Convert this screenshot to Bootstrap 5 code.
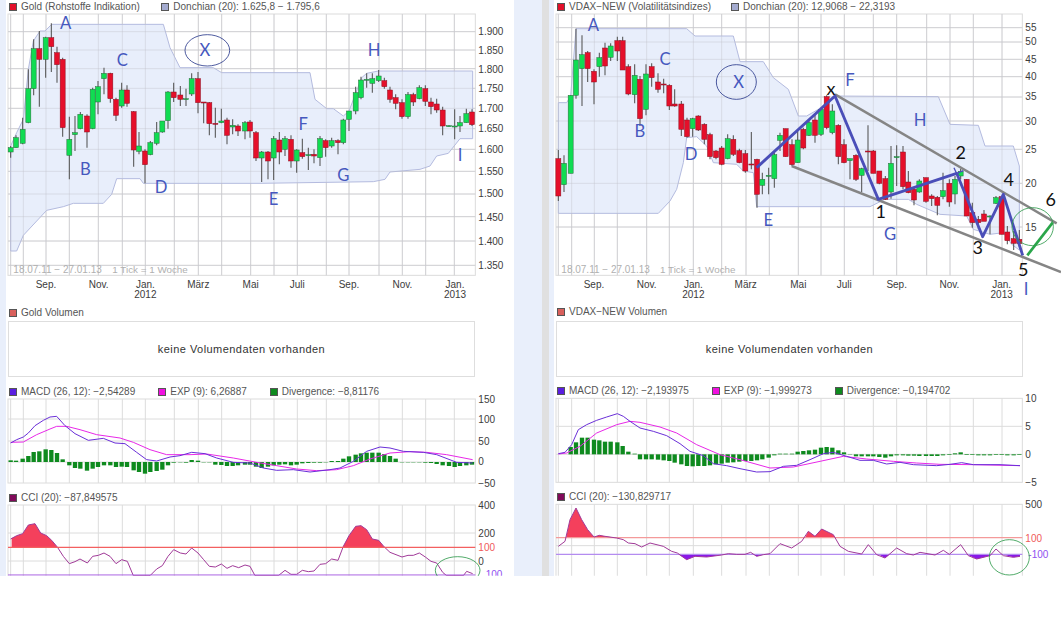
<!DOCTYPE html>
<html lang="de">
<head>
<meta charset="utf-8">
<title>Gold / VDAX-NEW</title>
<link href="https://cdn.jsdelivr.net/npm/bootstrap@5.3.0/dist/css/bootstrap.min.css" rel="stylesheet">
<style>
html,body{background:#fff;margin:0;overflow:hidden}
.sheet{height:576px;font-family:"Liberation Sans",Arial,sans-serif;font-size:10px;color:#444}
.strip-blue{background:#e9effb}
.strip-l{width:6px}
.strip-m{width:28px}
.strip-g{width:7px;background:#e0e0e0}
.strip-r{width:5px}
.pane{background:#fff;flex:none}
.pane-l{width:508px;padding-left:2px}
.pane-r{width:507px;padding-left:2px}
.leg-row{height:14px;line-height:14px;gap:23px;white-space:nowrap;padding-left:1px;color:#555}
.leg-top{gap:20px}
.pane-l .leg-top{gap:21.5px}
.leg-low{padding-top:1px}
.leg-item{gap:4px}
.swatch{width:8px;height:8px;border:1px solid #555;flex:none}
.c-red{background:#e3102a}
.c-don{background:#a4abd0}
.c-vol{background:#d9605c}
.c-mac{background:#5a1ee0}
.c-exp{background:#f010e0}
.c-div{background:#0e8a1e}
.c-cci{background:#800a5a}
.spc-7{margin-top:7px}
.spc-1{margin-top:1px}
.spc-2{margin-top:2px}
.vol-box{width:467px;height:56px;border:1px solid #dedede;font-size:11px;letter-spacing:.45px;color:#333}
svg.plot{display:block;overflow:visible;font-family:"Liberation Sans",Arial,sans-serif}
</style>
</head>
<body>
<div class="sheet d-flex align-items-stretch">
  <div class="strip-blue strip-l"></div>
  <div class="pane pane-l">
    <div class="leg-row leg-top d-flex align-items-center">
      <span class="leg-item d-flex align-items-center"><i class="swatch c-red"></i>Gold (Rohstoffe Indikation)</span>
      <span class="leg-item d-flex align-items-center"><i class="swatch c-don"></i>Donchian (20): 1.625,8 − 1.795,6</span>
    </div>
    <svg class="plot" id="m1" width="506" height="291" viewBox="24 44 1518 873"></svg>
    <div class="leg-row leg-low d-flex align-items-center"><span class="leg-item d-flex align-items-center"><i class="swatch c-vol"></i>Gold Volumen</span></div>
    <div class="vol-box spc-2 d-flex align-items-center justify-content-center">keine Volumendaten vorhanden</div>
    <div class="leg-row leg-low spc-7 d-flex align-items-center">
      <span class="leg-item d-flex align-items-center"><i class="swatch c-mac"></i>MACD (26, 12): −2,54289</span>
      <span class="leg-item d-flex align-items-center"><i class="swatch c-exp"></i>EXP (9): 6,26887</span>
      <span class="leg-item d-flex align-items-center"><i class="swatch c-div"></i>Divergence: −8,81176</span>
    </div>
    <svg class="plot spc-1" id="d1" width="506" height="84" viewBox="24 298 1518 252"></svg>
    <div class="leg-row leg-low spc-7 d-flex align-items-center"><span class="leg-item d-flex align-items-center"><i class="swatch c-cci"></i>CCI (20): −87,849575</span></div>
    <svg class="plot spc-1" id="c1" width="506" height="71" viewBox="24 616 1518 213"></svg>
  </div>
  <div class="strip-blue strip-m"></div>
  <div class="strip-g"></div>
  <div class="strip-blue strip-r"></div>
  <div class="pane pane-r">
    <div class="leg-row leg-top d-flex align-items-center">
      <span class="leg-item d-flex align-items-center"><i class="swatch c-red"></i>VDAX−NEW (Volatilitätsindizes)</span>
      <span class="leg-item d-flex align-items-center"><i class="swatch c-don"></i>Donchian (20): 12,9068 − 22,3193</span>
    </div>
    <svg class="plot" id="m2" width="505" height="291" viewBox="48 44 1515 873"></svg>
    <div class="leg-row d-flex align-items-center"><span class="leg-item d-flex align-items-center"><i class="swatch c-vol"></i>VDAX−NEW Volumen</span></div>
    <div class="vol-box spc-2 d-flex align-items-center justify-content-center">keine Volumendaten vorhanden</div>
    <div class="leg-row spc-7 d-flex align-items-center">
      <span class="leg-item d-flex align-items-center"><i class="swatch c-mac"></i>MACD (26, 12): −2,193975</span>
      <span class="leg-item d-flex align-items-center"><i class="swatch c-exp"></i>EXP (9): −1,999273</span>
      <span class="leg-item d-flex align-items-center"><i class="swatch c-div"></i>Divergence: −0,194702</span>
    </div>
    <svg class="plot spc-1" id="d2" width="505" height="84" viewBox="48 298 1515 252"></svg>
    <div class="leg-row spc-7 d-flex align-items-center"><span class="leg-item d-flex align-items-center"><i class="swatch c-cci"></i>CCI (20): −130,829717</span></div>
    <svg class="plot spc-1" id="c2" width="505" height="71" viewBox="48 616 1515 213"></svg>
  </div>
</div>
<script src="https://cdn.jsdelivr.net/npm/bootstrap@5.3.0/dist/js/bootstrap.bundle.min.js"></script>
<script>
// all chart coordinates are 3x page pixels
const GRID='#dcdcdc',TXT='#3c3c3c',OVER='rgba(190,190,200,.4)';
const pts=a=>a.map(p=>p.join(',')).join(' ');
const line=(x1,y1,x2,y2,c,w)=>`<line x1="${x1}" y1="${y1}" x2="${x2}" y2="${y2}" stroke="${c}" stroke-width="${w}"/>`;
const txt=(x,y,s,o={})=>`<text x="${x}" y="${y}" font-size="${o.size||30}" fill="${o.fill||TXT}" text-anchor="${o.anchor||'start'}" dominant-baseline="central"${o.font?` font-family="${o.font}"`:''}${o.ls?` letter-spacing="${o.ls}"`:''}>${s}</text>`;
const frame=(x0,x1,y0,y1,vs,hs)=>{
  let s=`<rect x="${x0}" y="${y0}" width="${x1-x0}" height="${y1-y0}" fill="#fff" stroke="${GRID}" stroke-width="3"/>`;
  vs.forEach(v=>s+=line(v,y0,v,y1,GRID,3));
  hs.forEach(h=>s+=line(x0,h,x1,h,GRID,3));
  return s;
};
const candles=d=>d.map(([x,h,l,t,b,c])=>
  line(x,h,x,l,'#555',3.2)+
  `<rect x="${x-7.5}" y="${t}" width="15" height="${Math.max(b-t,3)}" fill="${c?'#10dc52':'#e50f2a'}" stroke="${c?'#2a6a3a':'#8a1020'}" stroke-width="1.5"/>`).join('');
const band=p=>`<polygon points="${pts(p)}" fill="#e8eefb" stroke="#b4bbdf" stroke-width="3"/>`;
const letter=(x,y,s,c)=>txt(x,y,s,{size:c?54:50,fill:c||'#4658be',anchor:'middle',font:'Lato, Liberation Sans, sans-serif'});
const bars=(d,z)=>d.map(([x,v])=>`<rect x="${x-6.5}" y="${v<0?z+v:z}" width="13" height="${Math.abs(v)||3}" fill="#0e8a1e"/>`).join('');
const pl=(p,c,w)=>`<polyline points="${pts(p)}" fill="none" stroke="${c}" stroke-width="${w}" stroke-linejoin="round"/>`;
const pg=(p,c)=>`<polygon points="${pts(p)}" fill="${c}"/>`;

/* ---------- Gold ---------- */
const goldC=[[32,440,475,445,458,1],[48,408,445,415,445,1],[68,355,435,390,432,1],[85,210,372,268,370,1],[101,120,288,148,268,1],[118,95,322,148,180,0],[137,112,235,115,180,1],[154,72,218,115,142,0],[171,142,250,160,196,0],[188,175,412,180,385,0],[208,352,540,420,468,1],[225,350,455,400,406,1],[241,338,390,345,388,1],[261,345,445,350,398,0],[278,265,390,270,388,1],[294,245,345,262,308,1],[312,205,285,222,238,1],[331,220,310,222,298,0],[348,295,365,300,348,0],[365,250,325,272,320,1],[381,258,322,272,312,0],[401,335,502,337,452,0],[417,398,465,440,456,1],[435,450,552,455,496,0],[451,425,468,430,466,1],[470,368,438,400,432,1],[487,365,400,365,398,1],[504,275,388,278,364,1],[521,250,308,278,295,0],[541,260,320,287,300,0],[558,268,320,298,300,1],[575,222,290,238,284,1],[594,218,342,238,310,0],[611,308,372,308,310,0],[628,308,408,310,373,0],[646,325,415,372,373,0],[664,328,372,365,370,1],[681,355,435,362,408,0],[698,360,405,378,383,1],[714,375,410,380,395,0],[735,365,420,370,395,1],[750,362,415,368,395,0],[768,395,485,400,476,0],[785,455,548,458,476,1],[804,455,540,458,485,0],[821,410,542,418,476,1],[838,398,495,422,458,0],[855,410,470,418,450,1],[873,408,505,420,485,0],[890,450,520,452,485,1],[907,418,478,460,472,0],[925,445,512,466,469,1],[942,450,492,465,470,0],[960,410,500,418,475,1],[977,420,472,424,445,0],[995,415,445,424,440,1],[1014,420,465,424,430,0],[1030,358,435,362,430,1],[1047,335,395,335,360,1],[1067,262,345,280,335,1],[1083,232,300,242,295,1],[1100,222,265,240,242,1],[1117,222,280,238,252,1],[1136,212,248,230,244,1],[1153,235,268,244,262,0],[1170,262,310,272,300,0],[1187,285,330,295,312,0],[1206,300,358,310,352,0],[1224,278,358,286,352,1],[1240,280,320,286,308,0],[1258,258,300,265,298,1],[1276,258,320,268,306,0],[1293,295,345,308,322,0],[1310,298,340,314,332,0],[1328,322,408,332,380,0],[1347,378,382,379,381,1],[1364,330,420,380,382,1],[1380,350,398,370,380,1],[1399,328,370,343,370,1],[1416,330,380,338,376,0]];
const goldV=[32,70,138,208,295,367,436,523,595,665,752,822,892,979,1047,1137,1207,1277,1363];
const goldH=[97,152,208,267,327,388,450,516,584,652,725,798];
const goldBand=[[32,440],[50,400],[70,360],[85,210],[100,125],[120,95],[135,95],[155,75],[490,75],[510,145],[540,205],[640,205],[665,220],[930,220],[945,300],[980,328],[1000,328],[1030,350],[1047,335],[1085,235],[1100,222],[1135,215],[1418,215],[1418,418],[1380,418],[1345,462],[1310,470],[1290,500],[1260,510],[1170,518],[1155,540],[1120,547],[780,552],[430,552],[420,538],[350,538],[335,585],[310,612],[220,612],[190,622],[140,633],[70,708],[50,755],[32,755]];
let s=frame(24,1426,44,828,goldV,goldH);
s+=band(goldBand)+goldV.map(v=>line(v,44,v,828,OVER,3)).join('');
s+=goldH.map(h=>line(24,h,1426,h,OVER,3)).join('');
s+=candles(goldC);
s+=txt(40,811,'18.07.11 − 27.01.13',{fill:'#b0b0b0'})+txt(337,811,'1 Tick = 1 Woche',{fill:'#b0b0b0',size:29.5});
[['1.900',98],['1.850',154],['1.800',210],['1.750',268],['1.700',327],['1.650',388],['1.600',450],['1.550',517],['1.500',584],['1.450',654],['1.400',727],['1.350',800]].forEach(([t,y])=>s+=txt(1435,y,t));
[['Sep.',138],['Nov.',296],['Jan.',436],['März',595],['Mai',752],['Juli',892],['Sep.',1047],['Nov.',1207],['Jan.',1365]].forEach(([t,x])=>s+=txt(x,856,t,{anchor:'middle'}));
s+=txt(436,887,'2012',{anchor:'middle'})+txt(1365,887,'2013',{anchor:'middle'});
[[197,72,'A'],[615,152,'X'],[367,183,'C'],[256,508,'B'],[483,562,'D'],[821,598,'E'],[910,375,'F'],[1030,528,'G'],[1122,153,'H'],[1380,468,'I']].forEach(([x,y,t])=>s+=letter(x,y,t));
s+=`<ellipse cx="622" cy="153" rx="67" ry="47" fill="none" stroke="#2a3a8c" stroke-width="2.5"/>`;
m1.innerHTML=s;

const xsG=goldC.map(c=>c[0]);
const gBarsV=[-5,-4,-10,-18,-30,-32,-38,-36,-27,-8,10,18,20,26,20,15,10,10,15,14,15,25,30,35,30,27,23,10,2,1,2,-6,-4,1,1,8,9,12,12,10,8,8,14,18,14,10,8,7,10,8,4,3,2,2,1,-3,-3,-10,-17,-22,-26,-28,-28,-28,-24,-18,-10,1,1,1,1,2,3,6,10,12,15,12,10,8];
const macd1=[[32,430],[50,420],[70,412],[85,400],[105,378],[130,362],[150,352],[170,350],[195,378],[225,402],[265,422],[310,416],[345,430],[375,432],[410,458],[440,480],[470,484],[510,472],[540,468],[575,458],[615,462],[650,475],[700,488],[750,490],[790,505],[830,512],[880,510],[930,517],[990,510],[1020,505],[1060,485],[1100,455],[1140,442],[1170,445],[1210,455],[1270,458],[1310,465],[1370,488],[1418,490]];
const exp1=[[32,428],[70,427],[110,405],[150,388],[170,380],[200,380],[240,390],[290,405],[360,415],[400,428],[450,450],[500,465],[570,465],[620,463],[700,475],[770,488],[830,498],[890,508],[950,513],[1010,510],[1060,498],[1110,478],[1170,460],[1230,456],[1280,458],[1340,465],[1418,480]];
s=frame(24,1426,298,550,goldV,[358,424,487]);
s+=bars(xsG.map((x,i)=>[x,gBarsV[i]]),487);
s+=pl(exp1,'#e828e8',3)+pl(macd1,'#6a2fd8',3);
[['150',300],['100',361],['50',425],['0',487],['−50',551]].forEach(([t,y])=>s+=txt(1435,y,t));
d1.innerHTML=s;

const cci1=[[32,718],[50,708],[68,702],[85,676],[105,672],[122,700],[140,708],[155,722],[172,742],[190,770],[208,792],[225,786],[240,778],[262,790],[278,770],[295,767],[312,760],[330,770],[348,792],[365,780],[382,785],[400,828],[450,828],[470,808],[487,798],[504,770],[521,750],[541,760],[558,763],[575,745],[594,760],[611,780],[628,800],[646,802],[664,793],[681,806],[698,798],[716,804],[735,796],[750,800],[765,828],[835,828],[855,812],[873,824],[890,824],[907,812],[925,816],[942,814],[960,794],[977,792],[995,778],[1014,782],[1030,740],[1047,708],[1067,680],[1083,678],[1100,690],[1117,718],[1136,722],[1153,742],[1170,758],[1206,772],[1224,767],[1240,767],[1258,760],[1276,772],[1293,785],[1310,790],[1328,818],[1340,828],[1390,828],[1400,815],[1418,822]];
s=`<defs><clipPath id="cp1"><rect x="0" y="600" width="1600" height="228"/></clipPath></defs><g clip-path="url(#cp1)">`;
s+=frame(24,1426,616,840,goldV,[700,784]);
s+=pg([[35,743],[35,716],[50,708],[68,702],[85,676],[105,672],[122,700],[140,708],[155,722],[172,743]],'#f4405c');
s+=pg([[1028,743],[1030,740],[1047,708],[1067,680],[1083,678],[1100,690],[1117,718],[1136,722],[1153,743]],'#f4405c');
s+=pl(cci1,'#a03a98',3);
s+=line(24,743,1426,743,'#f36060',3.5)+line(24,826,1426,826,'#a050e0',3.5);
[['400',619],['200',703]].forEach(([t,y])=>s+=txt(1435,y,t));
s+=txt(1435,745,'100',{fill:'#f05a5a'})+txt(1435,787,'0')+txt(1457,826,'100',{fill:'#9050f0'});
s+=`</g><ellipse cx="1373" cy="812" rx="67" ry="41" fill="none" stroke="#2f9a4c" stroke-width="2.5"/>`;
c1.innerHTML=s;

/* ---------- VDAX ---------- */
const vdaxC=[[55,452,605,478,590,0],[72,468,578,492,556,1],[92,288,522,288,522,1],[108,88,298,182,288,1],[126,108,320,166,208,1],[143,155,248,160,208,0],[162,210,315,216,248,0],[178,160,232,175,202,1],[195,130,228,146,200,0],[212,132,185,140,174,1],[232,112,185,124,155,0],[248,112,212,124,212,0],[265,195,288,202,284,0],[284,195,312,228,286,1],[300,230,380,240,358,0],[318,195,348,224,330,1],[335,192,262,202,235,0],[354,222,280,248,270,0],[371,238,282,254,256,0],[388,255,332,258,320,0],[404,270,322,314,320,0],[424,305,410,314,390,0],[441,355,415,362,412,0],[458,355,412,358,388,1],[475,348,395,350,392,0],[493,372,435,375,420,0],[510,400,480,406,472,0],[528,452,480,455,475,0],[545,440,498,446,495,0],[563,405,480,418,478,1],[580,408,470,420,465,0],[598,448,492,454,490,0],[616,452,520,463,515,0],[634,398,510,494,496,0],[651,478,625,480,585,0],[667,520,585,540,558,1],[686,505,585,528,530,1],[703,460,565,466,538,1],[720,400,455,408,423,1],[737,388,472,388,472,0],[756,420,500,436,496,0],[773,395,490,422,490,1],[790,385,450,390,446,0],[807,362,410,370,408,1],[825,345,430,362,408,0],[843,325,410,330,405,1],[860,288,390,292,385,0],[877,315,405,335,400,1],[895,375,495,378,472,0],[912,420,492,436,490,0],[930,478,540,478,484,1],[948,465,545,468,540,0],[965,505,578,508,528,1],[984,378,515,455,458,0],[1000,452,522,455,522,0],[1018,515,555,515,552,0],[1036,530,602,538,600,0],[1053,440,598,492,578,1],[1070,438,560,472,474,1],[1089,440,570,458,562,0],[1105,515,582,548,580,0],[1122,565,618,570,602,0],[1138,540,580,545,578,1],[1158,535,610,535,606,0],[1175,585,620,590,598,0],[1192,590,648,594,618,0],[1209,520,600,574,592,1],[1228,540,622,552,608,0],[1245,530,615,540,584,1],[1262,508,540,516,530,1],[1280,540,650,540,650,0],[1297,610,685,640,670,0],[1315,650,690,660,670,0],[1332,632,665,644,666,0],[1350,648,705,650,652,1],[1368,590,614,595,612,1],[1385,590,705,592,705,0],[1402,680,735,698,724,0],[1421,695,752,718,732,0],[1438,692,742,720,733,0]];
const vdaxV=[55,95,163,232,320,388,460,545,618,688,775,843,913,1000,1070,1160,1230,1300,1386];
const vdaxH=[85,128,180,232,293,365,450,552,683];
const vdaxBand=[[55,310],[80,310],[92,290],[108,88],[440,88],[465,110],[580,110],[600,187],[670,187],[700,235],[745,270],[775,350],[800,350],[835,330],[880,290],[1195,292],[1230,375],[1315,378],[1335,440],[1420,440],[1438,500],[1438,752],[1415,735],[1390,700],[1350,705],[1300,690],[1280,650],[1200,645],[1130,615],[1105,600],[1035,600],[990,622],[650,622],[640,520],[610,515],[590,495],[520,490],[500,440],[470,412],[440,415],[430,490],[410,570],[390,605],[355,642],[55,642]];
s=frame(48,1447,44,828,vdaxV,vdaxH);
s+=band(vdaxBand)+vdaxV.map(v=>line(v,44,v,828,OVER,3)).join('');
s+=vdaxH.map(h=>line(48,h,1447,h,OVER,3)).join('');
s+=candles(vdaxC);
s+=txt(64,810,'18.07.11 − 27.01.13',{fill:'#b0b0b0'})+txt(360,810,'1 Tick = 1 Woche',{fill:'#b0b0b0',size:29.5});
[['55',85],['50',128],['45',180],['40',232],['35',293],['30',366],['25',450],['20',552],['15',684]].forEach(([t,y])=>s+=txt(1456,y,t));
[['Sep.',162],['Nov.',320],['Jan.',460],['März',617],['Mai',775],['Juli',913],['Sep.',1070],['Nov.',1228],['Jan.',1385]].forEach(([t,x])=>s+=txt(x,855,t,{anchor:'middle'}));
s+=txt(460,886,'2012',{anchor:'middle'})+txt(1385,886,'2013',{anchor:'middle'});
s+=line(885,285,1550,672,'#858585',7.5)+line(755,500,1563,818,'#858585',7.5);
s+=pl([[650,505],[885,290],[1015,600],[1250,522],[1328,712],[1390,585],[1448,768]],'#4a4eb8',8.5);
s+=line(1242,505,1254,532,'#4a4eb8',4)+line(1250,522,1270,514,'#4a4eb8',4);
s+=line(1462,768,1538,670,'#2aa64a',8);
[[160,78,'A'],[375,178,'C'],[596,248,'X'],[930,243,'F'],[1140,363,'H'],[453,463,'D'],[300,396,'B'],[685,663,'E'],[1050,705,'G'],[1458,870,'I']].forEach(([x,y,t])=>s+=letter(x,y,t));
[[873,265,'x'],[1022,636,'1'],[1262,457,'2'],[1313,743,'3'],[1406,538,'4'],[1450,808,'5'],[1532,600,'6']].forEach(([x,y,t])=>s+=letter(x,y,t,'#111'));
s+=`<ellipse cx="589" cy="248" rx="60" ry="52" fill="none" stroke="#2a3a8c" stroke-width="2.5"/>`;
s+=`<ellipse cx="1478" cy="682" rx="62" ry="57" fill="none" stroke="#2f9a4c" stroke-width="2.5"/>`;
m2.innerHTML=s;

const vBarsV=[0,0,-22,-36,-50,-50,-44,-42,-38,-38,-36,-25,-8,-2,15,15,15,16,18,20,25,30,35,36,35,35,33,30,28,25,24,22,20,20,18,15,10,3,-2,-2,-2,-8,-10,-12,-14,-20,-22,-20,-12,-6,1,6,6,6,6,8,10,6,3,3,4,4,5,5,5,5,3,2,-3,-6,2,2,3,3,3,2,2,3,3,2];
const xsV=vdaxC.map(c=>c[0]);
const macd2=[[55,462],[75,458],[95,435],[115,390],[140,375],[170,362],[200,352],[232,342],[250,350],[270,365],[300,385],[340,395],[380,408],[420,432],[450,455],[490,468],[520,492],[560,498],[600,507],[650,517],[690,516],[730,500],[770,497],[810,480],[850,462],[880,458],[920,470],[960,482],[1000,482],[1040,493],[1080,488],[1120,495],[1190,498],[1230,494],[1265,489],[1300,495],[1380,495],[1440,498]];
const exp2=[[55,463],[80,460],[120,440],[170,400],[230,375],[270,365],[300,368],[360,382],[410,400],[470,435],[540,465],[600,480],[690,505],[760,502],[840,485],[910,470],[980,478],[1060,485],[1130,490],[1200,494],[1300,495],[1440,498]];
s=frame(48,1447,296,548,vdaxV,[380,464]);
s+=bars(xsV.slice(2).map((x,i)=>[x,vBarsV[i+2]]),464);
s+=pl(exp2,'#e828e8',3)+pl(macd2,'#6a2fd8',3);
[['10',297],['5',381],['0',465],['−5',549]].forEach(([t,y])=>s+=txt(1456,y,t));
d2.innerHTML=s;

const cci2=[[55,740],[75,725],[90,660],[108,625],[125,660],[143,690],[162,712],[178,707],[195,710],[230,715],[250,720],[265,730],[285,732],[305,742],[330,730],[370,740],[395,755],[412,760],[440,780],[465,770],[500,772],[545,766],[565,762],[590,764],[615,764],[632,758],[650,770],[670,765],[690,762],[720,732],[755,745],[785,725],[805,695],[825,710],[845,688],[880,705],[900,740],[925,755],[965,763],[985,735],[1010,765],[1035,775],[1070,745],[1100,762],[1120,766],[1140,758],[1185,766],[1210,752],[1228,764],[1262,735],[1285,768],[1310,778],[1350,768],[1368,748],[1390,768],[1420,773],[1440,770]];
const vio='#8a18e8';
s=`<defs><clipPath id="cp2"><rect x="0" y="600" width="1600" height="228"/></clipPath></defs><g clip-path="url(#cp2)">`;
s+=frame(48,1447,614,840,vdaxV,[738]);
s+=pg([[78,714],[90,660],[108,625],[125,660],[143,690],[162,712],[178,707],[195,710],[230,714]],'#f4405c');
s+=pg([[795,714],[805,695],[825,710],[845,688],[880,705],[885,714]],'#f4405c');
[[[415,764],[440,780],[465,770],[500,772],[545,766],[550,764]],[[1015,764],[1035,775],[1050,764]],[[1280,764],[1310,778],[1350,768],[1355,764]],[[1385,764],[1420,773],[1440,770],[1440,764]],[[640,764],[650,770],[670,765],[675,764]]].forEach(p=>s+=pg(p,vio));
s+=line(48,714,1447,714,'#f49a9a',3.5)+line(48,764,1447,764,'#b48cf0',3.5);
s+=pl(cci2,'#a03a98',3);
s+=txt(1456,615,'500')+txt(1456,716,'100',{fill:'#f05a5a'})+txt(1465,766,'-100',{fill:'#9050f0'});
s+=`</g><ellipse cx="1408" cy="773" rx="60" ry="53" fill="none" stroke="#2f9a4c" stroke-width="2.5"/>`;
c2.innerHTML=s;
</script>
</body>
</html>
